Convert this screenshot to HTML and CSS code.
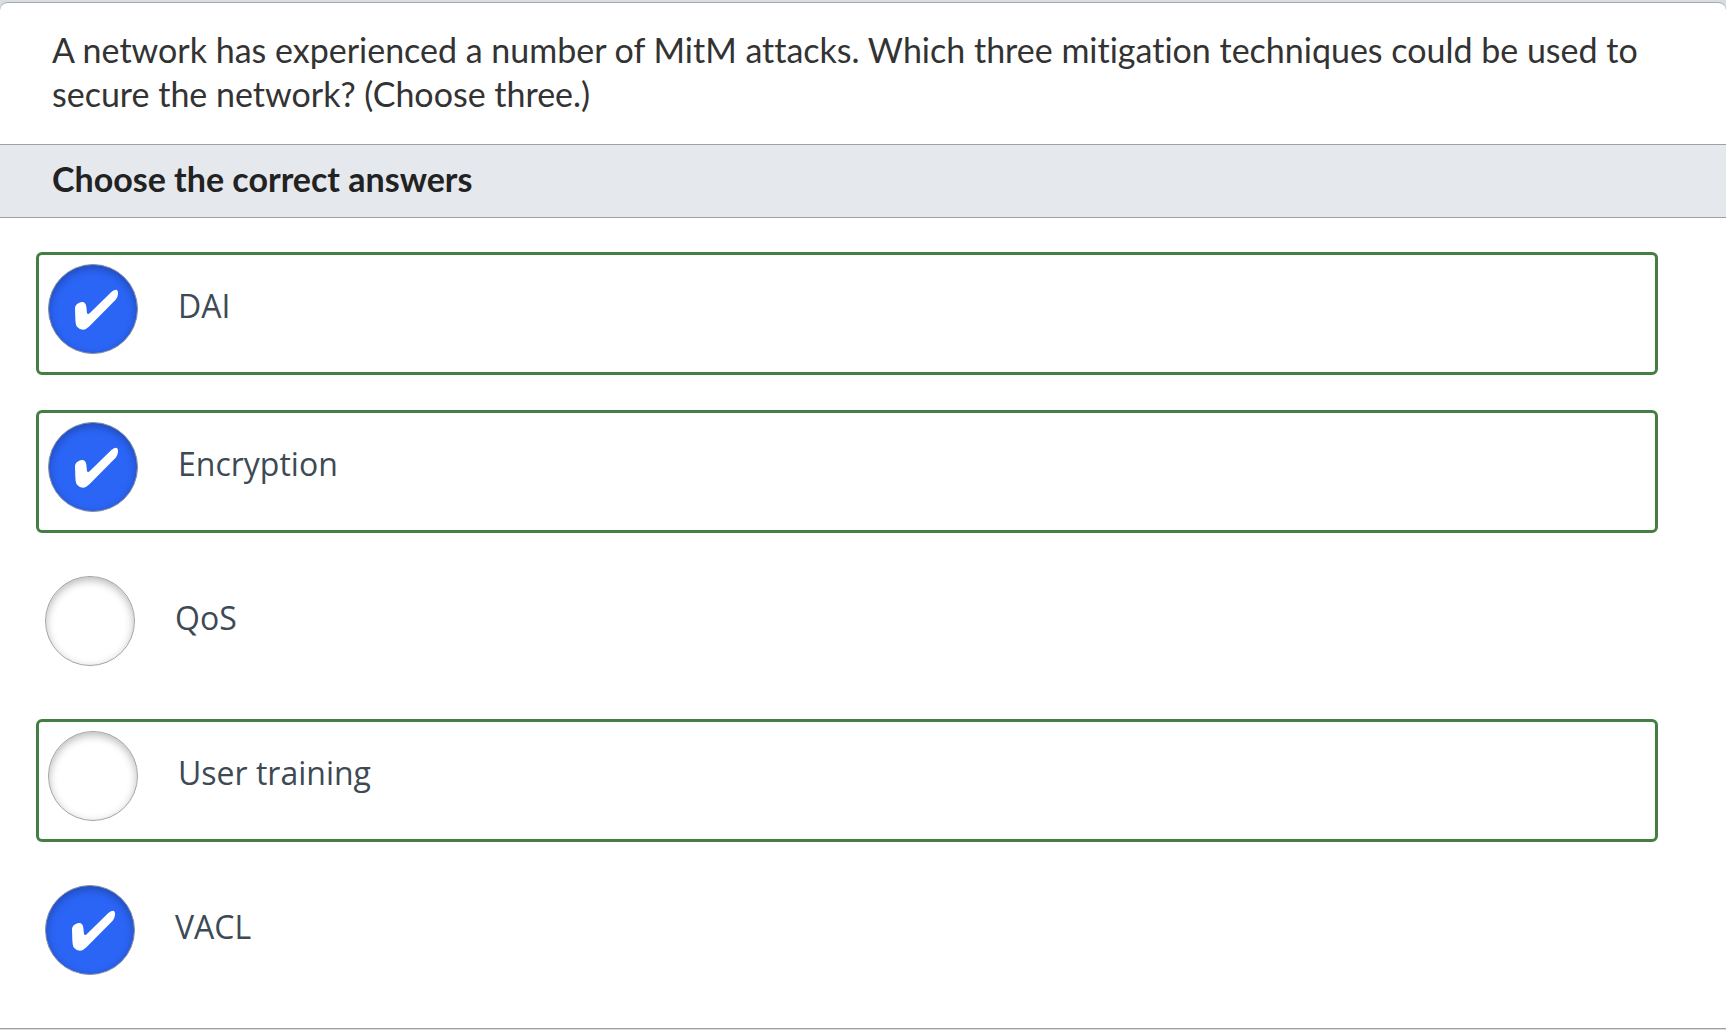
FILE: index.html
```html
<!DOCTYPE html>
<html lang="en">
<head>
  <meta charset="utf-8">
  <meta name="viewport" content="width=device-width, initial-scale=1">
  <title>Quiz question</title>
  <link rel="stylesheet" href="styles.css">
</head>
<body>
  <svg class="sprite" aria-hidden="true">
    <symbol id="check" viewBox="0 0 270 270">
      <path d="M81 132Q82 122 92 117Q112 108 115 128L117 147Q119 153 125 148L190 84Q198 77 205 77Q211 79 210 90Q209 101 203 107L125 186Q114 197 105 197Q95 197 87 188Q83 184 82 165Z"/>
    </symbol>
  </svg>
  <main class="card">
    <p class="question">A network has experienced a number of MitM attacks. Which three mitigation techniques could be used to secure the network? (Choose three.)</p>
    <h2 class="instruction" id="instruction">Choose the correct answers</h2>
    <form class="answers" aria-labelledby="instruction">
      <label class="answer answer-correct">
        <span class="tick"><input type="checkbox" class="tick-box" checked><svg class="tick-mark"><use href="#check"/></svg></span>
        <span class="answer-text">DAI</span>
      </label>
      <label class="answer answer-correct">
        <span class="tick"><input type="checkbox" class="tick-box" checked><svg class="tick-mark"><use href="#check"/></svg></span>
        <span class="answer-text">Encryption</span>
      </label>
      <label class="answer">
        <span class="tick"><input type="checkbox" class="tick-box"><svg class="tick-mark"><use href="#check"/></svg></span>
        <span class="answer-text">QoS</span>
      </label>
      <label class="answer answer-correct">
        <span class="tick"><input type="checkbox" class="tick-box"><svg class="tick-mark"><use href="#check"/></svg></span>
        <span class="answer-text">User training</span>
      </label>
      <label class="answer">
        <span class="tick"><input type="checkbox" class="tick-box" checked><svg class="tick-mark"><use href="#check"/></svg></span>
        <span class="answer-text">VACL</span>
      </label>
    </form>
  </main>
</body>
</html>
```

FILE: styles.css
```css
* {
  box-sizing: border-box;
}

body {
  margin: 0;
  padding-top: 2px;
  background: #d9dce1;
  font-family: "Open Sans", "Noto Sans", sans-serif;
  font-size: 32px;
  color: #3d4a54;
}

.sprite {
  display: none;
}

.card {
  background: #fff;
  border-top: 1px solid #a6a9ad;
  border-bottom: 1px solid #9da1a6;
  border-radius: 8px 8px 0 0;
}

.question,
.instruction {
  margin: 0;
  padding: 0 52px;
  font-family: Lato, "Open Sans", sans-serif;
  font-size: 34px;
  font-variant-ligatures: none;
  line-height: 44px;
}

.question {
  padding-top: 25px;
  padding-bottom: 28px;
  color: #333;
}

.instruction {
  padding-top: 12px;
  padding-bottom: 16px;
  background: #e5e8ed;
  border-top: 1px solid #9da1a6;
  border-bottom: 1px solid #9da1a6;
  font-weight: 700;
  color: #222;
}

.answers {
  display: flex;
  flex-direction: column;
  gap: 35px;
  padding: 34px 68px 35px 36px;
}

.answer {
  display: flex;
  gap: 40px;
  padding: 8px 9px 18px;
  cursor: pointer;
}

.answer-correct {
  padding-top: 9px;
  border: 3px solid #437f43;
  border-radius: 6px;
}

.tick {
  display: grid;
  flex: none;
}

.tick-box,
.tick-mark {
  grid-area: 1 / 1;
  width: 90px;
  height: 90px;
  margin: 0;
}

.tick-box {
  appearance: none;
  border: 1px solid #a3a3a3;
  border-radius: 50%;
  background: #fff;
  box-shadow: inset 0 3px 8px rgba(0, 0, 0, 0.28);
  cursor: pointer;
}

.tick-box:checked {
  border-color: #8a8f9c;
  background: #2b65f6;
}

.tick-mark {
  visibility: hidden;
  fill: #fff;
  pointer-events: none;
}

.tick-box:checked + .tick-mark {
  visibility: visible;
}

.answer-text {
  padding-top: 20px;
  line-height: 44px;
}
```
